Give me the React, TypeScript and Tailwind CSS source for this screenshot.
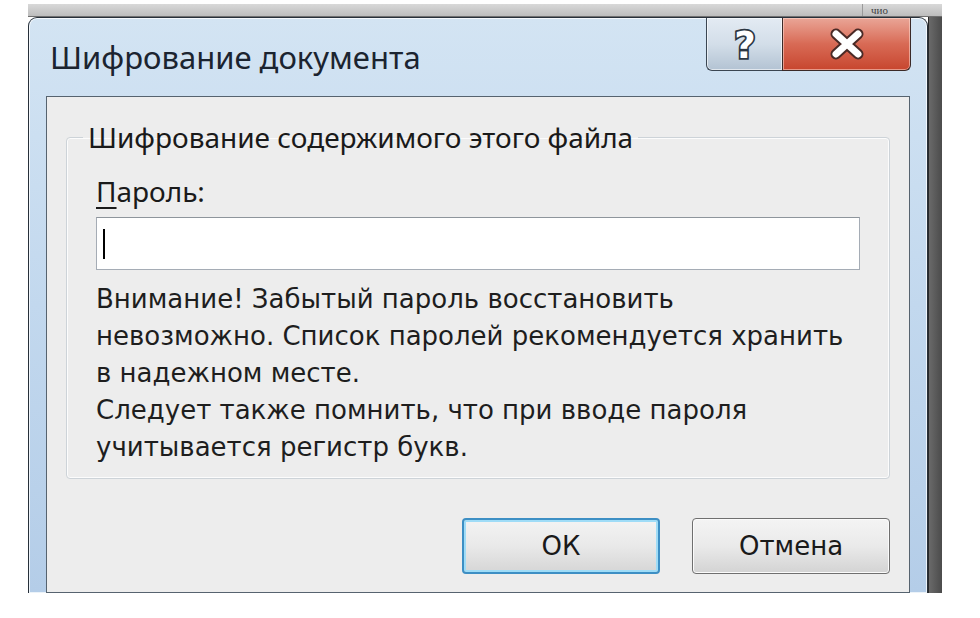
import React from "react";

const seg = { fontFamily: '"Noto Sans", "Open Sans", sans-serif' };
const tah = { fontFamily: '"DejaVu Sans", "Liberation Sans", sans-serif' };

function HelpButton() {
  return (
    <div className="w-[76px] h-[53px] rounded-bl-[6px] border border-t-0 border-r-0 border-[#3b4652] bg-gradient-to-b from-[#e3ebf3] via-[#d3dee9] to-[#b3c3d3] shadow-[inset_0_0_0_1px_rgba(255,255,255,0.6)] flex items-center justify-center">
      <svg width="36" height="46" viewBox="0 0 36 46">
        <text
          x="18"
          y="37"
          textAnchor="middle"
          fontSize="37"
          fontWeight="700"
          fontFamily="'DejaVu Sans', sans-serif"
          fill="#ffffff"
          stroke="#2c3642"
          strokeWidth="3.5"
          paintOrder="stroke"
        >
          ?
        </text>
      </svg>
    </div>
  );
}

function CloseButton() {
  return (
    <div className="w-[129px] h-[53px] rounded-br-[6px] border border-t-0 border-[#3b2a28] bg-gradient-to-b from-[#e9a597] via-[#d86a55] to-[#c7452e] shadow-[inset_0_0_0_1px_rgba(255,220,210,0.55)] flex items-center justify-center">
      <svg width="44" height="34" viewBox="0 0 44 34">
        <path d="M11 7 L33 27 M33 7 L11 27" stroke="#4a2a26" strokeWidth="11" strokeLinecap="round" />
        <path d="M11 7 L33 27 M33 7 L11 27" stroke="#ffffff" strokeWidth="7" strokeLinecap="round" />
      </svg>
    </div>
  );
}

export default function App() {
  return (
    <div className="w-[980px] h-[618px] bg-white overflow-hidden pt-[4px] pl-[28px]">
      <div className="w-[914px] flex flex-col">
        {/* background window strip */}
        <div className="h-[13px] flex bg-gradient-to-b from-[#d9d9d9] to-[#bdbdbd] border-b border-[#6f6f6f]">
          <div className="flex-1" />
          <div className="w-[80px] overflow-hidden leading-[12px] text-[11px] text-[#3f3f3f] pl-[8px] border-l border-[#9a9a9a]" style={{ fontFamily: '"Liberation Serif", serif' }}>
            чио
          </div>
        </div>
        <div className="flex">
          {/* dialog */}
          <div className="w-[900px] h-[576px] flex flex-col rounded-t-[9px] border border-b-0 border-[#27303a] bg-gradient-to-b from-[#d3e4f3] via-[#c2d8ee] to-[#b4cde8] shadow-[inset_0_0_0_1px_rgba(255,255,255,0.75)]">
            {/* title bar */}
            <div className="h-[78px] flex items-start">
              <div className="flex-1 pl-[21px] pt-[17px] text-[31px] leading-[44px] text-[#1b2430]" style={seg}>
                Шифрование документа
              </div>
              <div className="flex mr-[16px]">
                <HelpButton />
                <CloseButton />
              </div>
            </div>
            {/* content */}
            <div className="flex-1 mx-[17px] border border-b border-[#56636f] bg-[#ededed] flex flex-col">
              <fieldset className="mt-[24px] ml-[19px] w-[823px] rounded-[4px] border border-[#cdd3d8] shadow-[inset_0_0_0_1px_rgba(255,255,255,0.8)] px-[29px] pb-[12px]">
                <legend className="-ml-[13px] px-[5px] text-[28px] leading-[32px] text-[#1a1a1a]" style={seg}>
                  Шифрование содержимого этого файла
                </legend>
                <div className="pt-[22px] text-[28px] leading-[32px] text-[#1a1a1a]" style={seg}>
                  <span className="underline underline-offset-[5px] decoration-[2px]">П</span>ароль:
                </div>
                <div className="mt-[10px] h-[53px] w-[764px] border border-[#a5acb5] border-t-[#8e959c] bg-white flex items-center pl-[6px]">
                  <div className="w-[2px] h-[30px] bg-black" />
                </div>
                <div className="mt-[11px] text-[26px] leading-[37px] text-[#1e1e1e]" style={tah}>
                  Внимание! Забытый пароль восстановить
                  <br />
                  невозможно. Список паролей рекомендуется хранить
                  <br />
                  в надежном месте.
                  <br />
                  Следует также помнить, что при вводе пароля
                  <br />
                  учитывается регистр букв.
                </div>
              </fieldset>
              <div className="flex justify-end gap-[32px] mt-[39px] mr-[19px]">
                <button
                  className="w-[198px] h-[56px] rounded-[4px] border-[2px] border-[#3d8fc4] shadow-[inset_0_0_0_2px_#9fdcf7] bg-gradient-to-b from-[#f3f3f3] via-[#e9e9e9] to-[#d6d6d6] text-[26px] text-[#1a1a1a]"
                  style={tah}
                >
                  ОК
                </button>
                <button
                  className="w-[198px] h-[56px] rounded-[4px] border border-[#6f6f6f] shadow-[inset_0_0_0_1px_#fbfbfb] bg-gradient-to-b from-[#f4f4f4] via-[#eaeaea] to-[#d3d3d3] text-[26px] text-[#1a1a1a]"
                  style={tah}
                >
                  Отмена
                </button>
              </div>
            </div>
          </div>
          {/* background window strip at right */}
          <div className="w-[14px] h-[576px] bg-gradient-to-r from-[#6a6a6a] to-[#4b4b4b] border-l border-[#2a2a2a]" />
        </div>
      </div>
    </div>
  );
}
